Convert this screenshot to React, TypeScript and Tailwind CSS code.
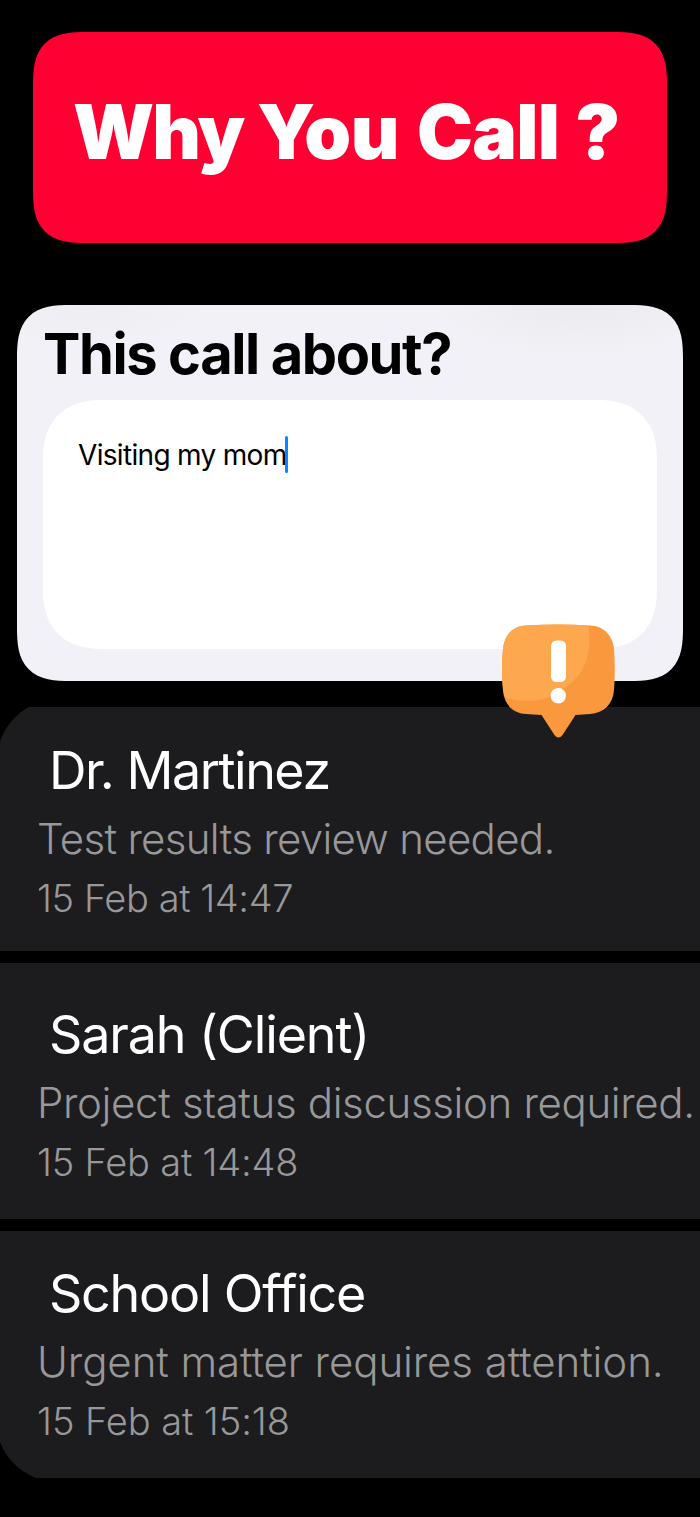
import clsx from 'clsx';

type Call = {
  name: string;
  reason: string;
  time: string;
  card: string;
  nameClass: string;
  reasonClass: string;
  timeClass: string;
};

const calls: Call[] = [
  {
    name: 'Dr. Martinez',
    reason: 'Test results review needed.',
    time: '15 Feb at 14:47',
    card: '-mt-2 -ml-[3px] h-[252px] rounded-tl-[62px] pt-10 pl-10',
    nameClass: 'tracking-[-1.5px]',
    reasonClass: 'tracking-[-0.68px]',
    timeClass: 'tracking-[-0.42px]',
  },
  {
    name: 'Sarah (Client)',
    reason: 'Project status discussion required.',
    time: '15 Feb at 14:48',
    card: 'h-[256px] pt-10 pl-[37px]',
    nameClass: 'tracking-[-1.12px]',
    reasonClass: 'tracking-[-0.35px]',
    timeClass: 'tracking-[-0.2px]',
  },
  {
    name: 'School Office',
    reason: 'Urgent matter requires attention.',
    time: '15 Feb at 15:18',
    card: '-mb-1 -ml-1 h-[251px] rounded-bl-[62px] pt-[31px] pl-[41px]',
    nameClass: 'tracking-[-1.24px]',
    reasonClass: 'tracking-[-0.08px]',
    timeClass: 'tracking-[-0.07px]',
  },
];

function AlertBubble() {
  return (
    <svg className="absolute top-[319px] left-[485px] h-[115px] w-[114px]" viewBox="0 0 114 115" fill="none">
      <path
        d="M24 1.5Q56 -0.5 88 1.5C102 2 111 12 112 25Q113.5 45 112 66C111 80 102 89 88 90L73.5 91L60.5 111Q56.5 116 52.5 111L39.5 91L24 90C10 89 2 80 1 66Q-1 45 1 25C2 12 10 2 24 1.5Z"
        fill="#fa983e"
      />
      <path
        d="M24 1.5Q56 -0.5 86.5 1.5Q87.5 8 87.3 19C86.500 31 84 41 78 49Q71 59 61 65C51 73 40 76.500 28 76.700Q15 77 4.500 74Q1.500 71 1 66Q-1 45 1 25C2 12 10 2 24 1.5Z"
        fill="#fda84e"
      />
      <rect x="49" y="16.5" width="15" height="41.5" rx="5.5" fill="#fff" />
      <circle cx="56.3" cy="71.7" r="7.7" fill="#fff" />
    </svg>
  );
}

function CallCard({ call }: { call: Call }) {
  return (
    <article className={clsx('shrink-0 overflow-hidden bg-[#1c1c1e] whitespace-nowrap', call.card)}>
      <h3 className={clsx('pl-[12px] text-[52px] leading-[64px] font-normal text-white', call.nameClass)}>{call.name}</h3>
      <p className={clsx('mt-1 text-[42px] leading-[64px] font-light text-[#98989a]', call.reasonClass)}>{call.reason}</p>
      <p className={clsx('text-[38px] leading-[54px] font-light text-[#98989a]', call.timeClass)}>{call.time}</p>
    </article>
  );
}

export default function App() {
  return (
    <div className="flex h-[1517px] w-[700px] flex-col overflow-hidden bg-black font-['Inter',sans-serif] [font-feature-settings:'calt'_0,'liga'_0]">
      <header className="mx-[33px] mt-8 flex h-[211px] shrink-0 rounded-[40px] bg-[#ff0032] pt-[62px] pl-[40px] [corner-shape:superellipse(1.5)] supports-[corner-shape:squircle]:rounded-[54px]">
        <h1 className="text-[75px] leading-[76px] font-black tracking-[-1px] [word-spacing:2px] whitespace-nowrap text-white">
          <span className="tracking-[-2px]">Why</span> <span className="-ml-[2px] tracking-[-0.5px]">You</span>{' '}
          <span className="ml-[2px] tracking-[-0.7px]">Call</span> ?
        </h1>
      </header>

      <section className="relative z-10 mx-[17px] mt-[62px] h-[376px] shrink-0 rounded-[40px] bg-[#f2f1f7] bg-[radial-gradient(ellipse_140px_50px_at_560px_0px,#ebeaee,transparent),radial-gradient(ellipse_120px_40px_at_70px_0px,#eeedf2,transparent)] px-[26px] pt-[17px] [corner-shape:superellipse(1.5)] supports-[corner-shape:squircle]:rounded-[54px]">
        <h2 className="text-[56px] leading-[64px] font-bold tracking-[-1.4px] whitespace-nowrap">This call about?</h2>
        <div className="mt-[14px] flex h-[249px] items-start rounded-[50px] bg-white pt-[36px] pl-[35px] [corner-shape:superellipse(1.25)] supports-[corner-shape:squircle]:rounded-[60px]">
          <span className="text-[28px] leading-[38px] tracking-[-0.68px]">Visiting my mom</span>
          <span className="-ml-[2px] h-[37px] w-[3px] rounded-full bg-[#0a84ff]" />
        </div>
        <AlertBubble />
      </section>

      <main className="mt-[26px] flex h-[771px] shrink-0 flex-col gap-3 overflow-hidden">
        {calls.map((call) => (
          <CallCard key={call.name} call={call} />
        ))}
      </main>
    </div>
  );
}
